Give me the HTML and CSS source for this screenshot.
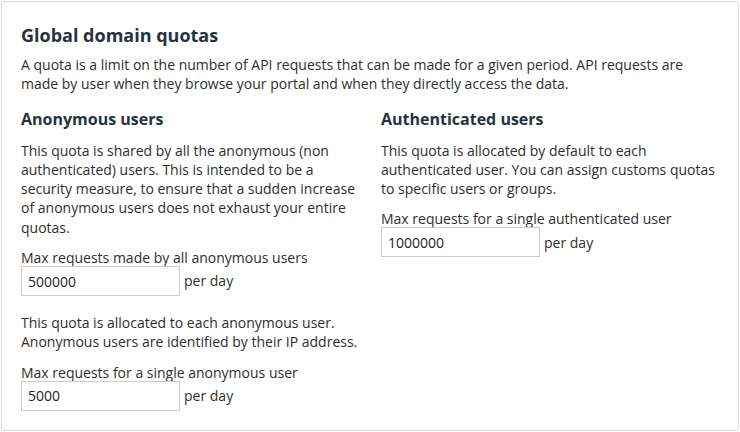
FILE: index.html
```html
<!DOCTYPE html>
<html>
<head>
<meta charset="utf-8">
<link rel="stylesheet" href="styles.css">
</head>
<body>
<div class="card">
  <h2 class="title">Global domain quotas</h2>
  <p class="intro">A quota is a limit on the number of API requests that can be made for a given period. API requests are made by user when they browse your portal and when they directly access the data.</p>
  <div class="cols">
    <div class="col col-left">
      <h3 class="sub">Anonymous users</h3>
      <p class="desc">This quota is shared by all the anonymous (non authenticated) users. This is intended to be a security measure, to ensure that a sudden increase of anonymous users does not exhaust your entire quotas.</p>
      <div class="field">
        <label class="label">Max requests made by all anonymous users</label>
        <div class="row"><input class="input" type="text" value="500000"><span class="unit">per day</span></div>
      </div>
      <p class="desc">This quota is allocated to each anonymous user. Anonymous users are identified by their IP address.</p>
      <div class="field">
        <label class="label">Max requests for a single anonymous user</label>
        <div class="row"><input class="input" type="text" value="5000"><span class="unit">per day</span></div>
      </div>
    </div>
    <div class="col">
      <h3 class="sub">Authenticated users</h3>
      <p class="desc">This quota is allocated by default to each authenticated user. You can assign customs quotas to specific users or groups.</p>
      <div class="field">
        <label class="label">Max requests for a single authenticated user</label>
        <div class="row"><input class="input" type="text" value="1000000"><span class="unit">per day</span></div>
      </div>
    </div>
  </div>
</div>
</body>
</html>
```
FILE: styles.css
```css
html, body {
  margin: 0;
  padding: 0;
  background: #fff;
}
body {
  padding: 1px;
  font-family: "Open Sans", "DejaVu Sans", sans-serif;
  font-size: 14px;
  line-height: 19.3px;
  color: #2e2e2e;
}
.card {
  box-sizing: border-box;
  width: 738px;
  height: 430px;
  border: 1px solid #dcdcdc;
  border-radius: 3px;
  padding: 20px 20px 0 19px;
}
.title {
  margin: 1px 0 8px;
  font-size: 18px;
  line-height: 24px;
  font-weight: 700;
  color: #26333f;
}
.intro {
  margin: 0 0 14px;
}
.cols {
  display: grid;
  grid-template-columns: 360px 1fr;
}
.col-left {
  padding-right: 20px;
}
.sub {
  margin: 0 0 11px;
  font-size: 16px;
  line-height: 22px;
  font-weight: 700;
  color: #26333f;
}
.desc {
  margin: 0 0 12px;
}
.field {
  margin-bottom: 17px;
}
.label {
  display: block;
  line-height: 17px;
}
.row {
  display: flex;
  align-items: center;
  gap: 4px;
}
.input {
  box-sizing: border-box;
  width: 159px;
  height: 30px;
  border: 1px solid #ccc;
  border-radius: 0;
  padding: 0 6px;
  font-family: "Open Sans", "DejaVu Sans", sans-serif;
  font-size: 14px;
  color: #222;
  margin: 0;
}
.unit {
  color: #2e2e2e;
}
```
